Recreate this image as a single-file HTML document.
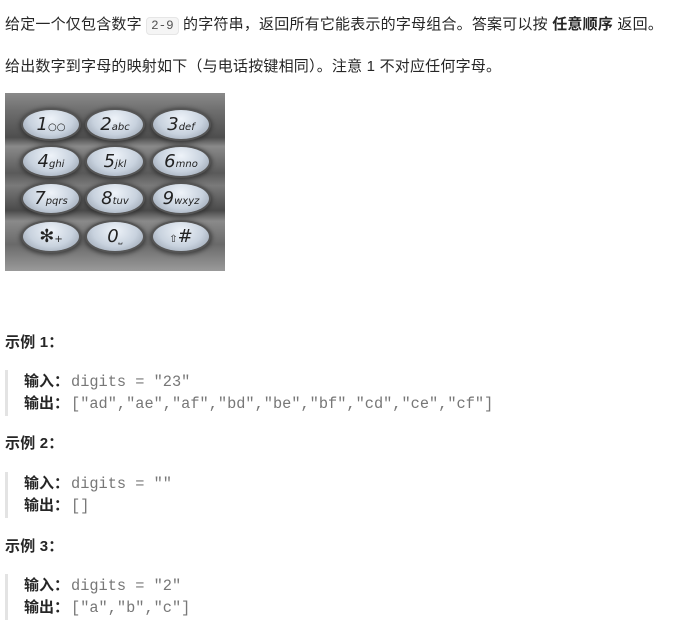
<!DOCTYPE html>
<html><head><meta charset="utf-8"><style>
body{margin:0;width:679px;height:643px;background:#fff;font-family:"Liberation Sans","Noto Sans CJK SC",sans-serif;color:#262626;font-size:15px;position:relative;overflow:hidden}
.t{position:absolute;left:5px;white-space:nowrap;line-height:20px;letter-spacing:0.2px}
code{font-family:"Liberation Mono",monospace;font-size:12.5px;color:#555;background:#f5f5f5;border:1px solid #e6e6e6;border-radius:4px;padding:1px 4px;letter-spacing:0}
b{font-weight:bold}
.bq{position:absolute;left:5px;width:3px;background:#e3e3e3}
.l{position:absolute;left:24px;white-space:nowrap;line-height:22px}
.m{font-family:"Liberation Mono",monospace;font-size:15.3px;color:#777;margin-left:2px}
.img{position:absolute;left:5px;top:93px;width:220px;height:178px;background:linear-gradient(#8a8a8a 0%,#6e6e6e 10%,#4e4e4e 25%,#8a8a8a 30%,#5a5a5a 45%,#7a7a7a 52%,#4a4a4a 66%,#8a8a8a 72%,#6a6a6a 85%,#9a9a9a 100%)}
.k{position:absolute;width:56px;height:29px;border-radius:50%;background:radial-gradient(ellipse at 50% 30%,#eef3f9 0%,#c8d2de 55%,#8e98a6 100%);box-shadow:0 0 0 2px #555,0 1px 4px 3px rgba(40,40,40,.7);font-family:"DejaVu Sans",sans-serif;font-style:italic;color:#222;font-size:18px;line-height:29px;text-align:center}
.k small{font-size:10px}
</style></head><body>
<div class="t" style="top:15px">给定一个仅包含数字 <code>2-9</code> 的字符串，返回所有它能表示的字母组合。答案可以按 <b>任意顺序</b> 返回。</div>
<div class="t" style="top:57px">给出数字到字母的映射如下（与电话按键相同）。注意 1 不对应任何字母。</div>
<div class="img">
<div class="k" style="left:18px;top:17px">1<small>○○</small></div>
<div class="k" style="left:82px;top:17px">2<small>abc</small></div>
<div class="k" style="left:148px;top:17px">3<small>def</small></div>
<div class="k" style="left:18px;top:54px">4<small>ghi</small></div>
<div class="k" style="left:82px;top:54px">5<small>jkl</small></div>
<div class="k" style="left:148px;top:54px">6<small>mno</small></div>
<div class="k" style="left:18px;top:91px">7<small>pqrs</small></div>
<div class="k" style="left:82px;top:91px">8<small>tuv</small></div>
<div class="k" style="left:148px;top:91px">9<small>wxyz</small></div>
<div class="k" style="left:18px;top:129px;font-style:normal">✻<small>+</small></div>
<div class="k" style="left:82px;top:129px">0<small>⎵</small></div>
<div class="k" style="left:148px;top:129px;font-style:normal"><small>⇧</small>#</div>
</div>
<div class="t" style="top:333px"><b>示例 1：</b></div>
<div class="bq" style="top:370px;height:46px"></div>
<div class="l" style="top:371px"><b>输入：</b><span class="m">digits = "23"</span></div>
<div class="l" style="top:393px"><b>输出：</b><span class="m">["ad","ae","af","bd","be","bf","cd","ce","cf"]</span></div>
<div class="t" style="top:434px"><b>示例 2：</b></div>
<div class="bq" style="top:472px;height:46px"></div>
<div class="l" style="top:473px"><b>输入：</b><span class="m">digits = ""</span></div>
<div class="l" style="top:495px"><b>输出：</b><span class="m">[]</span></div>
<div class="t" style="top:537px"><b>示例 3：</b></div>
<div class="bq" style="top:574px;height:46px"></div>
<div class="l" style="top:575px"><b>输入：</b><span class="m">digits = "2"</span></div>
<div class="l" style="top:597px"><b>输出：</b><span class="m">["a","b","c"]</span></div>
</body></html>
